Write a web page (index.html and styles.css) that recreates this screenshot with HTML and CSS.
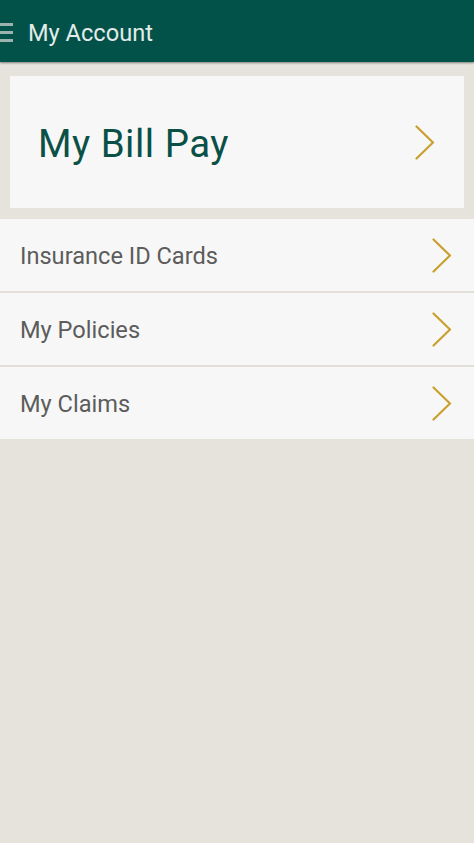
FILE: index.html
```html
<!DOCTYPE html>
<html>
<head>
<meta charset="utf-8">
<link rel="stylesheet" href="styles.css">
</head>
<body>
<header class="topbar">
  <span class="menu"><span></span><span></span><span></span></span>
  <span class="title">My Account</span>
</header>
<section class="featured">
  <a class="bill-card">
    <span class="bill-label">My Bill Pay</span>
    <svg class="chev" viewBox="0 0 20 35" width="20" height="35"><path d="M1.5 1.5 L18 17.5 L1.5 33.5" fill="none" stroke="#c9a02e" stroke-width="2.2" stroke-linecap="round" stroke-linejoin="round"/></svg>
  </a>
</section>
<ul class="menu-list">
  <li class="item"><span>Insurance ID Cards</span><svg class="chev" viewBox="0 0 20 35" width="20" height="35"><path d="M1.5 1.5 L18 17.5 L1.5 33.5" fill="none" stroke="#c9a02e" stroke-width="2.2" stroke-linecap="round" stroke-linejoin="round"/></svg></li>
  <li class="item"><span>My Policies</span><svg class="chev" viewBox="0 0 20 35" width="20" height="35"><path d="M1.5 1.5 L18 17.5 L1.5 33.5" fill="none" stroke="#c9a02e" stroke-width="2.2" stroke-linecap="round" stroke-linejoin="round"/></svg></li>
  <li class="item"><span>My Claims</span><svg class="chev" viewBox="0 0 20 35" width="20" height="35"><path d="M1.5 1.5 L18 17.5 L1.5 33.5" fill="none" stroke="#c9a02e" stroke-width="2.2" stroke-linecap="round" stroke-linejoin="round"/></svg></li>
</ul>
</body>
</html>
```
FILE: styles.css
```css
html, body {
  margin: 0;
  padding: 0;
  height: 100%;
}
body {
  background: #e6e3dd;
  font-family: Roboto, "Noto Sans", sans-serif;
}
.topbar {
  height: 62px;
  background: #02524a;
  display: flex;
  align-items: center;
  box-shadow: 0 1px 2px rgba(0,0,0,0.45);
  position: relative;
}
.menu {
  width: 13px;
  display: flex;
  flex-direction: column;
  gap: 5px;
  margin-top: 2px;
}
.menu span {
  display: block;
  height: 3px;
  background: #9fb3ae;
}
.title {
  margin-left: 15px;
  color: #e3ece9;
  font-size: 23.6px;
  margin-top: 3px;
}
.featured {
  padding: 14px 10px 11px 10px;
}
.bill-card {
  display: flex;
  align-items: center;
  justify-content: space-between;
  height: 132px;
  background: #f7f7f7;
  padding: 0 28px 0 28px;
}
.bill-label {
  font-size: 38.4px;
  letter-spacing: 0.5px;
  color: #0a5047;
  margin-top: 3px;
}
.bill-card .chev {
  margin-right: 1px;
}
.menu-list {
  list-style: none;
  margin: 0;
  padding: 0;
}
.item {
  height: 72px;
  background: #f7f7f7;
  border-bottom: 2px solid #e2dfd9;
  display: flex;
  align-items: center;
  justify-content: space-between;
  padding: 0 22px 0 20px;
  font-size: 23.6px;
  color: #5c5c5c;
}
.item span {
  margin-top: 2px;
}
.item:last-child {
  border-bottom: none;
}
.chev {
  display: block;
}
```
